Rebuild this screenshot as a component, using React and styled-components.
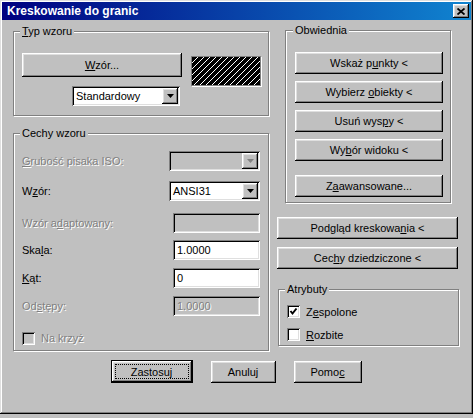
import React from 'react'
import styled, { createGlobalStyle } from 'styled-components'

const GlobalStyle = createGlobalStyle`
  html, body {
    margin: 0;
    padding: 0;
    background: #c0c0c0;
  }
  body {
    font-family: "Liberation Sans", Arial, sans-serif;
    font-size: 11px;
    color: #000;
  }
`

const raised = `
  box-shadow: inset -1px -1px #000, inset 1px 1px #fff, inset -2px -2px #808080, inset 2px 2px #dfdfdf;
`
const sunken = `
  box-shadow: inset 1px 1px #808080, inset -1px -1px #fff, inset 2px 2px #000, inset -2px -2px #dfdfdf;
`

const Window = styled.div`
  box-sizing: border-box;
  width: 473px;
  height: 414px;
  padding: 2px;
  background: #c0c0c0;
  box-shadow: inset -1px -1px #000, inset 1px 1px #dfdfdf, inset -2px -2px #808080, inset 2px 2px #fff;
  display: flex;
  flex-direction: column;
`

const TitleBar = styled.div`
  height: 18px;
  display: flex;
  align-items: center;
  justify-content: space-between;
  padding: 0 2px 0 5px;
  background: linear-gradient(90deg, #000080, #1084d0);
  color: #fff;
  font-weight: bold;
  font-size: 12px;
`

const CloseButton = styled.div`
  width: 16px;
  height: 14px;
  display: flex;
  align-items: center;
  justify-content: center;
  background: #c0c0c0;
  ${raised}
`

const Body = styled.div`
  padding: 11px 12px 0 11px;
`

const Main = styled.div`
  display: flex;
  gap: 8px;
`

const LeftCol = styled.div`
  width: 256px;
  display: flex;
  flex-direction: column;
  gap: 17px;
`

const RightCol = styled.div`
  width: 182px;
  margin-top: -1px;
  display: flex;
  flex-direction: column;
`

const Group = styled.div`
  position: relative;
  box-sizing: border-box;
  height: ${p => p.$h}px;
  margin: ${p => p.$m || '0'};
  padding: ${p => p.$pad};
  border: 1px solid #808080;
  box-shadow: inset 1px 1px #fff, 1px 1px #fff;
`

const Caption = styled.span`
  position: absolute;
  top: -7px;
  left: ${p => p.$x}px;
  padding: 0 2px;
  line-height: 13px;
  background: #c0c0c0;
`

const Button = styled.div`
  position: relative;
  box-sizing: border-box;
  width: ${p => p.$w}px;
  height: ${p => p.$h || 22}px;
  margin-top: ${p => p.$mt || 0}px;
  display: flex;
  align-items: center;
  justify-content: center;
  background: #c0c0c0;
  ${raised}
`

const DefaultButton = styled(Button)`
  border: 1px solid #000;
  &::after {
    content: '';
    position: absolute;
    inset: 3px;
    border: 1px dotted #000;
  }
`

const PatternRow = styled.div`
  display: flex;
  align-items: flex-start;
`

const PatternStack = styled.div`
  width: 160px;
  display: flex;
  flex-direction: column;
  align-items: flex-end;
  gap: 9px;
`

const Preview = styled.div`
  width: 68px;
  height: 28px;
  margin: 3px 0 0 9px;
  border: 1px solid #808080;
  box-shadow: 1px 1px #fff;
  display: flex;
`

const Combo = styled.div`
  box-sizing: border-box;
  width: ${p => p.$w}px;
  height: 20px;
  margin-right: ${p => p.$mr || 0}px;
  padding: 2px;
  display: flex;
  align-items: center;
  background: ${p => (p.$disabled ? '#c0c0c0' : '#fff')};
  ${sunken}
`

const ComboText = styled.span`
  flex: 1;
  padding-left: 2px;
`

const DropButton = styled.div`
  width: 16px;
  height: 16px;
  display: flex;
  align-items: center;
  justify-content: center;
  background: #c0c0c0;
  ${raised}
`

const Edit = styled.div`
  box-sizing: border-box;
  width: 87px;
  height: 20px;
  padding-left: 4px;
  display: flex;
  align-items: center;
  background: ${p => (p.$disabled ? '#c0c0c0' : '#fff')};
  color: ${p => (p.$disabled ? '#808080' : '#000')};
  text-shadow: ${p => (p.$disabled ? '1px 1px #fff' : 'none')};
  ${sunken}
`

const Row = styled.div`
  height: 20px;
  margin-top: ${p => p.$mt || 0}px;
  display: flex;
  align-items: center;
  justify-content: space-between;
`

const Label = styled.span`
  color: ${p => (p.$disabled ? '#808080' : '#000')};
  text-shadow: ${p => (p.$disabled ? '1px 1px #fff' : 'none')};
`

const CheckRow = styled.div`
  height: ${p => p.$h || 13}px;
  margin-top: ${p => p.$mt || 0}px;
  display: flex;
  align-items: center;
  gap: 6px;
`

const CheckBox = styled.div`
  box-sizing: border-box;
  width: 13px;
  height: 13px;
  display: flex;
  align-items: center;
  justify-content: center;
  background: ${p => (p.$disabled ? '#c0c0c0' : '#fff')};
  ${sunken}
`

const ButtonStack = styled.div`
  margin-top: ${p => p.$mt || 0}px;
  display: flex;
  flex-direction: column;
  gap: ${p => p.$gap || 7}px;
`

const Footer = styled.div`
  margin-top: 9px;
  display: flex;
  justify-content: center;
  align-items: center;
  gap: 18px;
`

const Arrow = ({ color = '#000' }) => (
  <svg width="7" height="4" viewBox="0 0 7 4">
    <polygon points="0,0 7,0 3.5,4" fill={color} />
  </svg>
)

const Check = () => (
  <svg width="9" height="9" viewBox="0 0 9 9">
    <polyline points="1.5,4 3.5,6.5 7.5,1.5" fill="none" stroke="#000" strokeWidth="2" />
  </svg>
)

const CloseGlyph = () => (
  <svg width="8" height="7" viewBox="0 0 8 7">
    <path d="M0.5 0.5 L7.5 6.5 M7.5 0.5 L0.5 6.5" stroke="#000" strokeWidth="1.8" />
  </svg>
)

const Hatch = () => (
  <svg width="68" height="28">
    <defs>
      <pattern id="ansi31" width="6" height="6" patternUnits="userSpaceOnUse">
        <path d="M-1 7 L7 -1 M-1 1 L1 -1 M5 7 L7 5" stroke="#fff" strokeWidth="1" />
      </pattern>
    </defs>
    <rect width="68" height="28" fill="#000" />
    <rect width="68" height="28" fill="url(#ansi31)" />
  </svg>
)

export default function App() {
  return (
    <>
      <GlobalStyle />
      <Window>
        <TitleBar>
          <span>Kreskowanie do granic</span>
          <CloseButton><CloseGlyph /></CloseButton>
        </TitleBar>
        <Body>
          <Main>
            <LeftCol>
              <Group $h={85} $pad="21px 8px 0 8px">
                <Caption $x={6}><u>T</u>yp wzoru</Caption>
                <PatternRow>
                  <PatternStack>
                    <Button $w={160} $h={24}><span><u>W</u>zór...</span></Button>
                    <Combo $w={108} $mr={2}>
                      <ComboText>Standardowy</ComboText>
                      <DropButton><Arrow /></DropButton>
                    </Combo>
                  </PatternStack>
                  <Preview><Hatch /></Preview>
                </PatternRow>
              </Group>

              <Group $h={218} $pad="17px 8px 0 8px">
                <Caption $x={6}>Cechy wzoru</Caption>
                <Row>
                  <Label $disabled><u>G</u>rubość pisaka ISO:</Label>
                  <Combo $w={91} $disabled>
                    <ComboText />
                    <DropButton><Arrow color="#808080" /></DropButton>
                  </Combo>
                </Row>
                <Row $mt={10}>
                  <Label>W<u>z</u>ór:</Label>
                  <Combo $w={91}>
                    <ComboText>ANSI31</ComboText>
                    <DropButton><Arrow /></DropButton>
                  </Combo>
                </Row>
                <Row $mt={12}>
                  <Label $disabled>Wzór a<u>d</u>aptowany:</Label>
                  <Edit $disabled />
                </Row>
                <Row $mt={7}>
                  <Label>Ska<u>l</u>a:</Label>
                  <Edit>1.0000</Edit>
                </Row>
                <Row $mt={8}>
                  <Label><u>K</u>ąt:</Label>
                  <Edit>0</Edit>
                </Row>
                <Row $mt={8}>
                  <Label $disabled>Od<u>s</u>tępy:</Label>
                  <Edit $disabled>1.0000</Edit>
                </Row>
                <CheckRow $h={20} $mt={12}>
                  <CheckBox $disabled />
                  <Label $disabled>Na krzyż</Label>
                </CheckRow>
              </Group>
            </LeftCol>

            <RightCol>
              <Group $h={173} $m="0 8px" $pad="21px 8px 0 9px">
                <Caption $x={7}>Obwiednia</Caption>
                <ButtonStack>
                  <Button $w={148}><span>Wskaż p<u>u</u>nkty &lt;</span></Button>
                  <Button $w={148}><span>Wybierz <u>o</u>biekty &lt;</span></Button>
                  <Button $w={148}><span>Usuń wys<u>p</u>y &lt;</span></Button>
                  <Button $w={148}><span>Wy<u>b</u>ór widoku &lt;</span></Button>
                  <Button $w={148} $mt={7}><span>Z<u>a</u>awansowane...</span></Button>
                </ButtonStack>
              </Group>

              <ButtonStack $mt={14} $gap={8}>
                <Button $w={181}><span>Podgląd kreskowa<u>n</u>ia &lt;</span></Button>
                <Button $w={181}><span>Cec<u>h</u>y dziedziczone &lt;</span></Button>
              </ButtonStack>

              <Group $h={57} $m="20px 0 0 1px" $pad="15px 8px 0 8px">
                <Caption $x={6}>Atrybuty</Caption>
                <CheckRow>
                  <CheckBox><Check /></CheckBox>
                  <span>Z<u>e</u>spolone</span>
                </CheckRow>
                <CheckRow $mt={10}>
                  <CheckBox />
                  <span><u>R</u>ozbite</span>
                </CheckRow>
              </Group>
            </RightCol>
          </Main>

          <Footer>
            <DefaultButton $w={82} $h={23}><span>Zastosuj</span></DefaultButton>
            <Button $w={65}><span>Anuluj</span></Button>
            <Button $w={68}><span>Pomo<u>c</u></span></Button>
          </Footer>
        </Body>
      </Window>
    </>
  )
}
